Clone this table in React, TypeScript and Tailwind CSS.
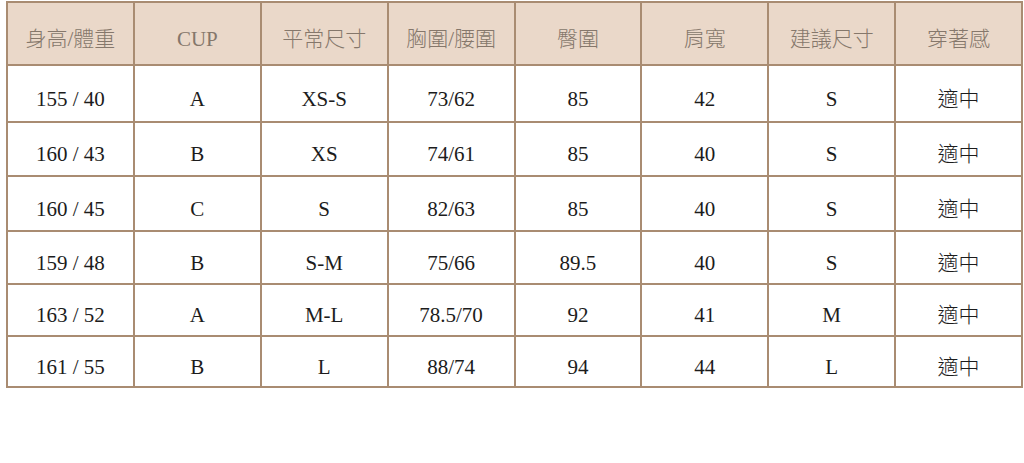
const headers = ["身高/體重", "CUP", "平常尺寸", "胸圍/腰圍", "臀圍", "肩寬", "建議尺寸", "穿著感"];

const rows: { h: string; cells: string[] }[] = [
  { h: "h-[57px]", cells: ["155 / 40", "A", "XS-S", "73/62", "85", "42", "S", "適中"] },
  { h: "h-[54px]", cells: ["160 / 43", "B", "XS", "74/61", "85", "40", "S", "適中"] },
  { h: "h-[55px]", cells: ["160 / 45", "C", "S", "82/63", "85", "40", "S", "適中"] },
  { h: "h-[53px]", cells: ["159 / 48", "B", "S-M", "75/66", "89.5", "40", "S", "適中"] },
  { h: "h-[52px]", cells: ["163 / 52", "A", "M-L", "78.5/70", "92", "41", "M", "適中"] },
  { h: "h-[51px]", cells: ["161 / 55", "B", "L", "88/74", "94", "44", "L", "適中"] },
];

const font = { fontFamily: '"Liberation Serif", "Noto Sans CJK TC", serif' };

export default function App() {
  return (
    <div className="w-[1024px] h-[463px] bg-white pt-px pl-[6px]">
      <table className="border-collapse table-fixed w-[1017px]" style={font}>
        <thead>
          <tr className="h-[63px] bg-[#ead8c9]">
            {headers.map((t) => (
              <th
                key={t}
                className="border-2 border-[#a98c72] text-[#85776b] text-[21px] font-light text-center align-middle pt-[12px]"
              >
                {t}
              </th>
            ))}
          </tr>
        </thead>
        <tbody>
          {rows.map((r) => (
            <tr key={r.cells[0]} className={r.h}>
              {r.cells.map((c, i) => (
                <td
                  key={i}
                  className="border-2 border-[#a98c72] text-[#1c1c1c] text-[21px] font-light text-center align-middle pt-[12px]"
                >
                  {c}
                </td>
              ))}
            </tr>
          ))}
        </tbody>
      </table>
    </div>
  );
}
